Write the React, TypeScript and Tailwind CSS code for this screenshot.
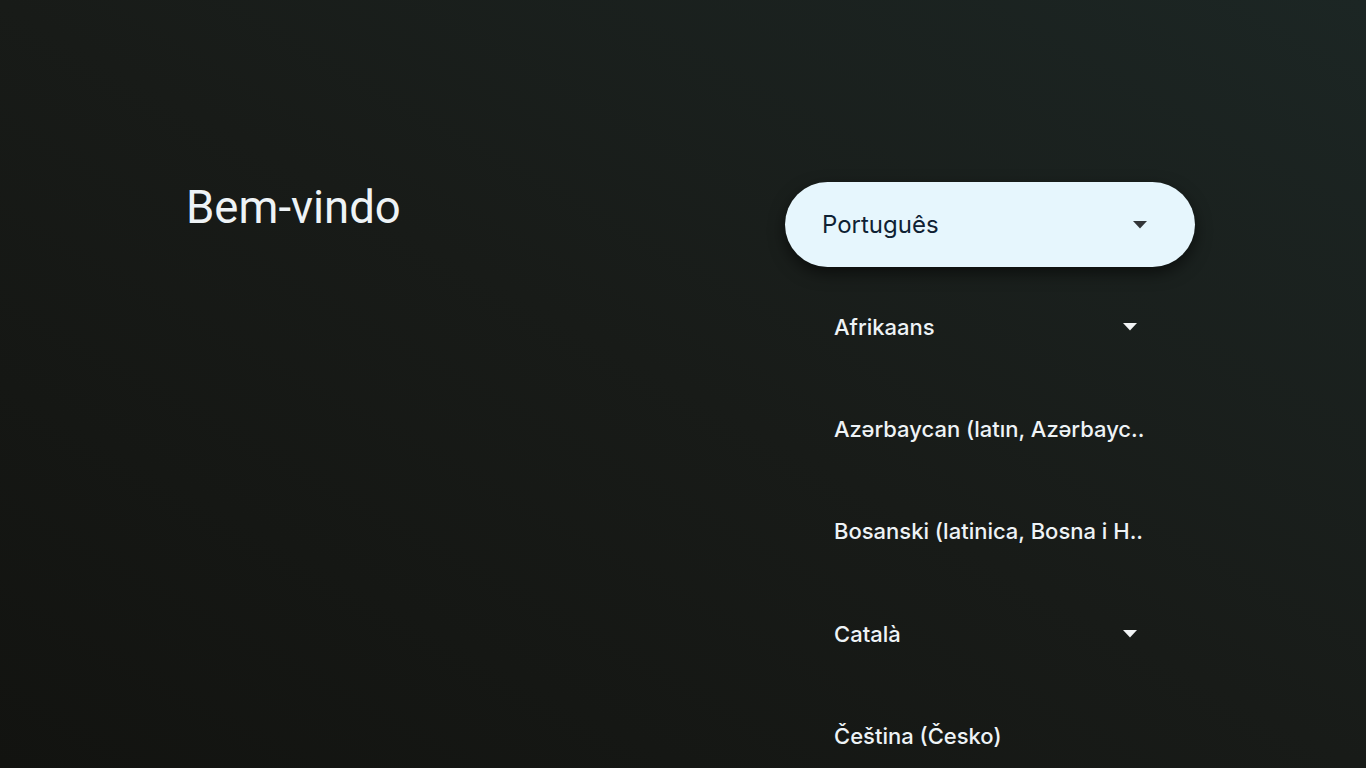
import React from "react";

const Arrow = ({ color }: { color: string }) => (
  <svg width="14" height="8" viewBox="0 0 14 8" className="shrink-0">
    <path d="M0 0 L14 0 L7 7.5 Z" fill={color} />
  </svg>
);

const items: { label: string; arrow: boolean }[] = [
  { label: "Afrikaans", arrow: true },
  { label: "Azərbaycan (latın, Azərbayc..", arrow: false },
  { label: "Bosanski (latinica, Bosna i H..", arrow: false },
  { label: "Català", arrow: true },
  { label: "Čeština (Česko)", arrow: false },
];

export default function App() {
  return (
    <div
      className="w-[1366px] h-[768px] overflow-hidden bg-gradient-to-tr from-[#121310] via-[#181b18] to-[#1c2624] flex"
      style={{ fontFamily: "Roboto, 'Noto Sans', sans-serif" }}
    >
      <div className="w-[785px] shrink-0 pl-[186px] pt-[180px]">
        <h1 className="text-[45.5px] leading-[56px] text-[#eef3f6] font-normal">Bem-vindo</h1>
      </div>
      <div className="flex flex-col pt-[182px] w-[410px] shrink-0">
        <div className="h-[85px] shrink-0 rounded-full bg-[#e6f6fd] flex items-center justify-between pl-[37px] pr-[48px] shadow-[0_6px_16px_rgba(0,0,0,0.55)]">
          <span className="text-[24px] text-[#0f2133] font-normal" style={{ fontFamily: "Inter, Roboto, sans-serif" }}>
            Português
          </span>
          <Arrow color="#333538" />
        </div>
        <div className="flex flex-col pt-[9px] pl-[49px] pr-[58px]">
          {items.map((it) => (
            <div key={it.label} className="h-[102.4px] shrink-0 flex items-center justify-between">
              <span
                className="text-[22px] text-[#eef3f6] font-medium whitespace-nowrap"
                style={{ fontFamily: "Inter, Roboto, sans-serif" }}
              >
                {it.label}
              </span>
              {it.arrow && <Arrow color="#f2f4f5" />}
            </div>
          ))}
        </div>
      </div>
    </div>
  );
}
